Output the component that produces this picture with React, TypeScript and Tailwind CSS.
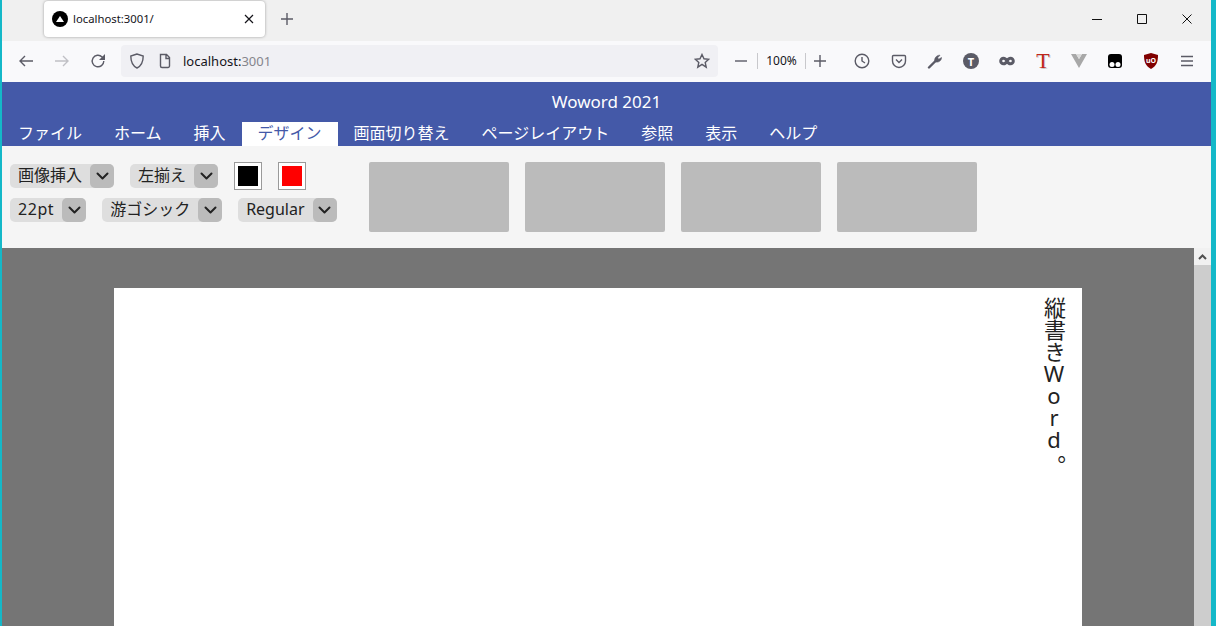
import React from "react";

const FONT = "font-['Noto_Sans','Noto_Sans_CJK_JP',sans-serif]";

const tabs = ["ファイル", "ホーム", "挿入", "デザイン", "画面切り替え", "ページレイアウト", "参照", "表示", "ヘルプ"];

const Chevron = () => (
  <svg width="13" height="8" viewBox="0 0 13 8" fill="none" stroke="#222" strokeWidth="2" strokeLinecap="round" strokeLinejoin="round">
    <path d="M1.500 1.500 6.500 6.500l5-5" />
  </svg>
);

const Select = ({ label, className = "" }: { label: string; className?: string }) => (
  <div className="flex h-6 items-stretch rounded-[5px] bg-[#dedede] text-[16px] leading-[22px] text-[#222]">
    <span className={`px-2 ${className}`}>{label}</span>
    <span className="flex w-6 items-center justify-center rounded-[5px] bg-[#bbbbbb]">
      <Chevron />
    </span>
  </div>
);

const Swatch = ({ color }: { color: string }) => (
  <div className="h-7 w-7 border border-[#9a9a9a] bg-white p-[3px]">
    <div className={`h-full w-full ${color}`} />
  </div>
);

const Icon = ({ children, className = "" }: { children: React.ReactNode; className?: string }) => (
  <svg width="16" height="16" viewBox="0 0 16 16" fill="none" stroke="#5b5b66" strokeWidth="1.4" className={className}>
    {children}
  </svg>
);

const BrowserChrome = () => (
  <>
    <div className="flex h-[41px] items-start bg-[#f0f0f0]">
      <div className="ml-[42px] mt-px flex h-9 w-[221px] items-center rounded bg-white pl-2 pr-2 shadow-[0_0_3px_rgba(0,0,0,0.35)]">
        <span className="flex h-4 w-4 items-center justify-center rounded-full bg-black">
          <span className="h-0 w-0 border-x-[4px] border-b-[6px] border-x-transparent border-b-white" />
        </span>
        <span className="ml-[5px] flex-1 text-[11.3px] text-[#15141a]">localhost:3001/</span>
        <Icon>
          <path d="M4 4l8 8M12 4l-8 8" stroke="#15141a" strokeWidth="1.2" />
        </Icon>
      </div>
      <Icon className="ml-[14px] mt-[11px]">
        <path d="M8 2v12M2 8h12" />
      </Icon>
      <div className="flex-1" />
      <svg width="101" height="12" viewBox="0 0 101 12" fill="none" stroke="#111" strokeWidth="1" className="mr-[18px] mt-[13px]">
        <path d="M0 6.500h10M45.500 1.500h9v9h-9zM90.500 1.500l9 9M99.500 1.500l-9 9" />
      </svg>
    </div>
    <div className="flex h-[41px] items-center bg-[#f9f9fb] pb-[1px]">
      <Icon className="ml-[16px]">
        <path d="M15 8H2M7 3 2 8l5 5" />
      </Icon>
      <Icon className="ml-[20px]">
        <path d="M1 8h13M9 3l5 5-5 5" stroke="#c0c0c5" />
      </Icon>
      <Icon className="ml-[20px]">
        <path d="M13.800 8a5.800 5.800 0 1 1-1.700-4.100L14 5.800" />
        <path d="M15 1v6H9z" fill="#5b5b66" stroke="none" />
      </Icon>
      <div className="ml-[15px] flex h-8 w-[597px] items-center rounded bg-[#f0f0f4] pl-2 pr-2">
        <Icon>
          <path d="M8 1 1.800 3c0 5.500 1 9.500 6.200 12 5.200-2.500 6.200-6.500 6.200-12z" />
        </Icon>
        <Icon className="ml-[12px]">
          <path d="M3.500 1.500h6l3 3v8.500a1.500 1.500 0 0 1-1.500 1.500h-6a1.500 1.500 0 0 1-1.500-1.500zM9 1.500v4h3.500" />
        </Icon>
        <span className="ml-[10px] flex-1 pt-px text-[13px]">
          <span className="text-[#15141a]">localhost:</span>
          <span className="text-[#85858c]">3001</span>
        </span>
        <Icon>
          <path d="M8 1.500l2 4.300 4.700.5-3.500 3.200 1 4.600L8 11.300l-4.200 2.800 1-4.600L1.300 6.300 6 5.800z" />
        </Icon>
      </div>
      <Icon className="ml-[15px]">
        <path d="M2 8h12" />
      </Icon>
      <div className="ml-[8px] h-[16px] w-px bg-[#c8c8cc]" />
      <span className="w-[47px] text-center text-[12px] text-[#15141a]">100%</span>
      <div className="h-[16px] w-px bg-[#c8c8cc]" />
      <Icon className="ml-[6px]">
        <path d="M8 2v12M2 8h12" />
      </Icon>
      <Icon className="ml-[26px]">
        <circle cx="8" cy="8" r="6.800" />
        <path d="M8 4v4l3 2" />
      </Icon>
      <Icon className="ml-[21px]">
        <path d="M2.500 2.500h11a1 1 0 0 1 1 1V8a6.500 6.500 0 0 1-13 0V3.500a1 1 0 0 1 1-1z" />
        <path d="M5 6.500 8 9.500l3-3" />
      </Icon>
      <Icon className="ml-[20px]">
        <path d="M2 14.500 8 8.500" strokeWidth="2.400" strokeLinecap="round" />
        <path d="M7.800 8.800C6.800 5.500 9.500 2 13 2.200l-2.300 2.600 1 1.500 2.800-1.800c.2 3.200-3.200 5.500-6.700 4.300z" fill="#5b5b66" strokeWidth="0.6" />
      </Icon>
      <span className="ml-[20px] flex h-4 w-4 items-center justify-center rounded-full bg-[#5b5b66] text-[11px] font-bold leading-none text-white">T</span>
      <Icon className="ml-[20px]">
        <path d="M8 8c-1-2-2-2.800-3.500-2.800a2.800 2.800 0 0 0 0 5.600C6 10.800 7 10 8 8c1 2 2 2.800 3.500 2.800a2.800 2.800 0 0 0 0-5.600C10 5.200 9 6 8 8z" strokeWidth="3" />
      </Icon>
      <span className="ml-[20px] w-4 text-center font-['Liberation_Serif',serif] text-[22px] leading-4 text-[#c0261a] [text-shadow:1px_1px_0_rgba(0,0,0,0.2)]">T</span>
      <svg width="16" height="14" viewBox="0 0 16 14" className="ml-[20px]">
        <path d="M0 0h5l3 5 3-5h5L8 14z" fill="#a8a8a8" />
        <path d="M5 0h6L8 5z" fill="#dcdcdc" />
      </svg>
      <svg width="16" height="16" viewBox="0 0 16 16" className="ml-[20px]">
        <rect x="1" y="1" width="14" height="14" rx="3" fill="#000" />
        <circle cx="5" cy="11.500" r="2.500" fill="#fff" />
        <circle cx="11" cy="11.500" r="2.500" fill="#fff" />
      </svg>
      <svg width="16" height="16" viewBox="0 0 16 16" className="ml-[20px]">
        <path d="M8 0 15 2c0 7-1.500 11-7 14C2.500 13 1 9 1 2z" fill="#800000" />
        <text x="8" y="10" textAnchor="middle" fontSize="7" fontWeight="700" fill="#fff">uO</text>
      </svg>
      <Icon className="ml-[20px]">
        <path d="M2 3.500h12M2 8h12M2 12.500h12" />
      </Icon>
    </div>
  </>
);

export default function App() {
  return (
    <div className={`flex h-[626px] w-[1216px] flex-col overflow-hidden border-l-2 border-r-[5px] border-[#14b8c8] ${FONT}`}>
      <BrowserChrome />
      <header className="flex h-16 shrink-0 flex-col bg-[#4459a8] text-white">
        <h1 className="h-[40px] pt-2 text-center text-[17px] leading-6">Woword 2021</h1>
        <nav className="flex h-6 text-[16px] leading-[22px]">
          {tabs.map((t) => (
            <div key={t} className={`px-4 ${t === "デザイン" ? "bg-white text-[#4459a8]" : ""}`}>
              {t}
            </div>
          ))}
        </nav>
      </header>
      <section className="flex h-[102px] shrink-0 bg-[#f5f5f5] pl-2 pt-4">
        <div className="flex flex-col gap-[10px] pt-[2px]">
          <div className="flex h-6 items-center gap-4">
            <Select label="画像挿入" />
            <Select label="左揃え" />
            <Swatch color="bg-black" />
            <Swatch color="bg-[#ff0000]" />
          </div>
          <div className="flex gap-4">
            <Select label="22pt" className="tracking-[0.55px]" />
            <Select label="游ゴシック" />
            <Select label="Regular" />
          </div>
        </div>
        <div className="ml-8 flex gap-4">
          {[0, 1, 2, 3].map((i) => (
            <div key={i} className="h-[70px] w-[140px] rounded-[2px] bg-[#bbbbbb]" />
          ))}
        </div>
      </section>
      <main className="flex min-h-0 flex-1 bg-[#757575]">
        <div className="flex flex-1 justify-center overflow-hidden pt-10">
          <div className="h-[800px] w-[968px] bg-white pr-[17px] pt-[9px]">
            <p className="ml-auto h-[200px] text-[22px] leading-[22px] text-[#222] [text-orientation:upright] [writing-mode:vertical-rl]">
              縦書き<span className="-mt-[5px] mb-[9px] tracking-[-8px]">Word</span>。
            </p>
          </div>
        </div>
        <div className="w-[17px] bg-[#cdcdcd]">
          <div className="flex h-[17px] items-center justify-center bg-[#f1f1f1]">
            <svg width="9" height="6" viewBox="0 0 9 6" fill="none" stroke="#505050" strokeWidth="2">
              <path d="M1 5l3.500-3.500L8 5" />
            </svg>
          </div>
        </div>
      </main>
    </div>
  );
}
